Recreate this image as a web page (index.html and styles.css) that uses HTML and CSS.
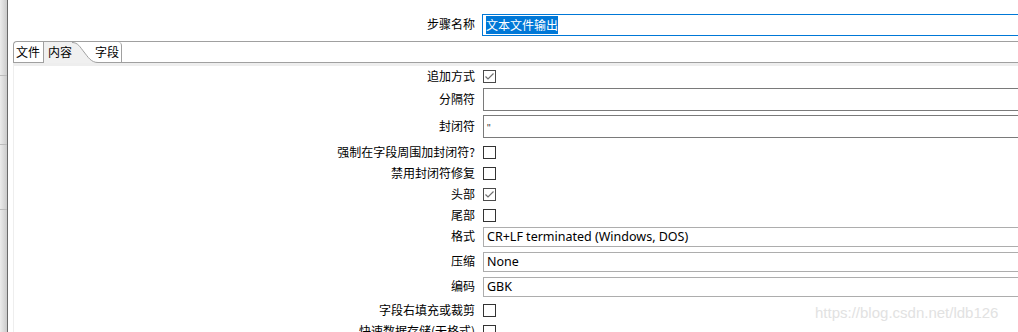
FILE: index.html
```html
<!DOCTYPE html>
<html>
<head>
  <meta charset="UTF-8">
  <title>文本文件输出</title>
  <link rel="stylesheet" href="styles.css">
</head>
<body>
  <div class="window">
    <div class="side">
      <div class="side-cell c1"></div>
      <div class="side-cell c2"></div>
      <div class="side-cell c3"></div>
      <div class="side-cell"></div>
    </div>
    <div class="main">
      <div class="step-row">
        <label class="lbl">步骤名称</label>
        <div class="step-input"><span class="sel">文本文件输出</span></div>
      </div>
      <div class="folder">
        <div class="tabs">
          <div class="tab first">文件</div>
          <div class="tab active">
            <span class="tab-text">内容</span>
            <svg class="curve" width="26" height="21" viewBox="0 0 26 21">
              <path d="M0,0 C6,0 8,5 12,10 C16,15 19,20.5 26,20.5 L26,21 L0,21 Z" fill="#f0f0f0"/>
              <path d="M0,0.5 C6,0.5 8,5 12,10 C16,15 19,20.5 26,20.5" fill="none" stroke="#a0a0a0"/>
            </svg>
          </div>
          <div class="tab last">字段</div>
          <div class="tab-fill"></div>
        </div>
        <div class="panel">
          <div class="row check first-row">
            <span class="lbl">追加方式</span>
            <span class="cb checked"><svg width="13" height="13" viewBox="0 0 13 13"><polyline points="2.5,6.5 5,9 10.5,3.5" fill="none" stroke="#6f6f6f" stroke-width="1.2"/></svg></span>
          </div>
          <div class="row field">
            <span class="lbl">分隔符</span>
            <div class="text"></div>
          </div>
          <div class="row field gap4">
            <span class="lbl">封闭符</span>
            <div class="text"><span class="quote">"</span></div>
          </div>
          <div class="row check gap4">
            <span class="lbl">强制在字段周围加封闭符?</span>
            <span class="cb"></span>
          </div>
          <div class="row check">
            <span class="lbl">禁用封闭符修复</span>
            <span class="cb"></span>
          </div>
          <div class="row check">
            <span class="lbl">头部</span>
            <span class="cb checked"><svg width="13" height="13" viewBox="0 0 13 13"><polyline points="2.5,6.5 5,9 10.5,3.5" fill="none" stroke="#6f6f6f" stroke-width="1.2"/></svg></span>
          </div>
          <div class="row check">
            <span class="lbl">尾部</span>
            <span class="cb"></span>
          </div>
          <div class="row combo gap1">
            <span class="lbl">格式</span>
            <div class="select">CR+LF terminated (Windows, DOS)</div>
          </div>
          <div class="row combo gap5">
            <span class="lbl">压缩</span>
            <div class="select">None</div>
          </div>
          <div class="row combo gap5">
            <span class="lbl">编码</span>
            <div class="select">GBK</div>
          </div>
          <div class="row check gap3">
            <span class="lbl">字段右填充或裁剪</span>
            <span class="cb"></span>
          </div>
          <div class="row check">
            <span class="lbl">快速数据存储(无格式)</span>
            <span class="cb"></span>
          </div>
        </div>
      </div>
    </div>
    <div class="watermark">https://blog.csdn.net/ldb126</div>
  </div>
</body>
</html>
```

FILE: styles.css
```css
body {
  margin: 0;
  font-family: 'Noto Sans CJK SC', 'Noto Sans', sans-serif;
  font-size: 12px;
  color: #000000;
  background-color: #FFFFFF;
  overflow: hidden;
}

.window {
  position: relative;
  display: flex;
  width: 1018px;
  height: 332px;
  overflow: hidden;
}

.side {
  width: 7px;
  flex-shrink: 0;
  display: flex;
  flex-direction: column;
  background: linear-gradient(to right, #ececec, #cbcbcb);
  border-right: 1px solid #6a6a6a;
}

.side-cell {
  border-bottom: 1px solid #bcbcbc;
}

.side-cell.c1 { height: 75px; }
.side-cell.c2 { height: 68px; }
.side-cell.c3 { height: 64px; }
.side-cell:last-child { flex: 1; border-bottom: none; }

.main {
  flex: 1;
  min-width: 0;
  padding-left: 5px;
}

.lbl {
  width: 462px;
  flex-shrink: 0;
  text-align: right;
  line-height: 16px;
  white-space: nowrap;
}

.step-row {
  display: flex;
  align-items: center;
  padding-top: 14px;
  gap: 7px;
}

.step-row .lbl {
  margin-top: -3px;
}

.step-input {
  flex: 1;
  height: 22px;
  margin-right: -20px;
  box-sizing: border-box;
  border: 1px solid #0078d7;
  padding: 1px 3px;
}

.sel {
  display: inline-block;
  height: 18px;
  line-height: 18px;
  background-color: #0078d7;
  color: #FFFFFF;
}

.folder {
  margin-top: 5px;
}

.tabs {
  display: flex;
  height: 20px;
  border-top: 1px solid #a0a0a0;
  border-bottom: 1px solid #a0a0a0;
  border-left: 1px solid #a0a0a0;
  border-top-left-radius: 4px;
}

.tab {
  display: flex;
  align-items: center;
  line-height: 16px;
}

.tab.first {
  padding: 0 3px 0 2px;
  border-right: 1px solid #a0a0a0;
}

.tab.active {
  margin-bottom: -1px;
}

.tab-text {
  align-self: stretch;
  display: flex;
  align-items: center;
  padding: 0 0 1px 4px;
  background-color: #f0f0f0;
}

.tab.active .curve {
  display: block;
  align-self: flex-start;
}

.tab.last {
  margin-left: -4px;
  padding: 0 2px 0 1px;
  border-right: 1px solid #a0a0a0;
  border-top-right-radius: 4px;
}

.tab-fill {
  flex: 1;
}

.panel {
  height: 300px;
  padding-top: 3px;
  box-shadow: inset 1px 3px 0 #eeeeee;
}

.row {
  display: flex;
  align-items: center;
  gap: 8px;
}

.row .lbl {
  width: 460px;
  margin-left: 2px;
  margin-top: -2px;
}

.row.check { height: 21px; }
.row.field { height: 23px; margin-top: 1px; }
.row.combo { height: 20px; }
.row.gap1 { margin-top: 1px; }
.row.gap3 { margin-top: 3px; }
.row.gap4 { margin-top: 4px; }
.row.gap5 { margin-top: 5px; }

.cb {
  width: 13px;
  height: 13px;
  box-sizing: border-box;
  border: 1px solid #333333;
  background-color: #FFFFFF;
}

.cb.checked {
  border-color: #4a4a4a;
}

.cb svg {
  display: block;
  margin: -1px;
}

.text {
  flex: 1;
  height: 23px;
  margin-right: -20px;
  box-sizing: border-box;
  border: 1px solid #7a7a7a;
  padding: 2px 3px;
}

.quote {
  font-family: 'Liberation Sans', sans-serif;
  font-size: 10px;
  line-height: 14px;
  color: #3a3a3a;
}

.select {
  flex: 1;
  height: 20px;
  margin-right: -20px;
  box-sizing: border-box;
  border: 1px solid #adadad;
  padding: 0 3px;
  font-family: 'Noto Sans', sans-serif;
  font-size: 12.5px;
  line-height: 18px;
}

.watermark {
  position: absolute;
  left: 815px;
  top: 304px;
  font-family: 'Liberation Sans', sans-serif;
  font-size: 15px;
  color: #e2e2e2;
}
```
